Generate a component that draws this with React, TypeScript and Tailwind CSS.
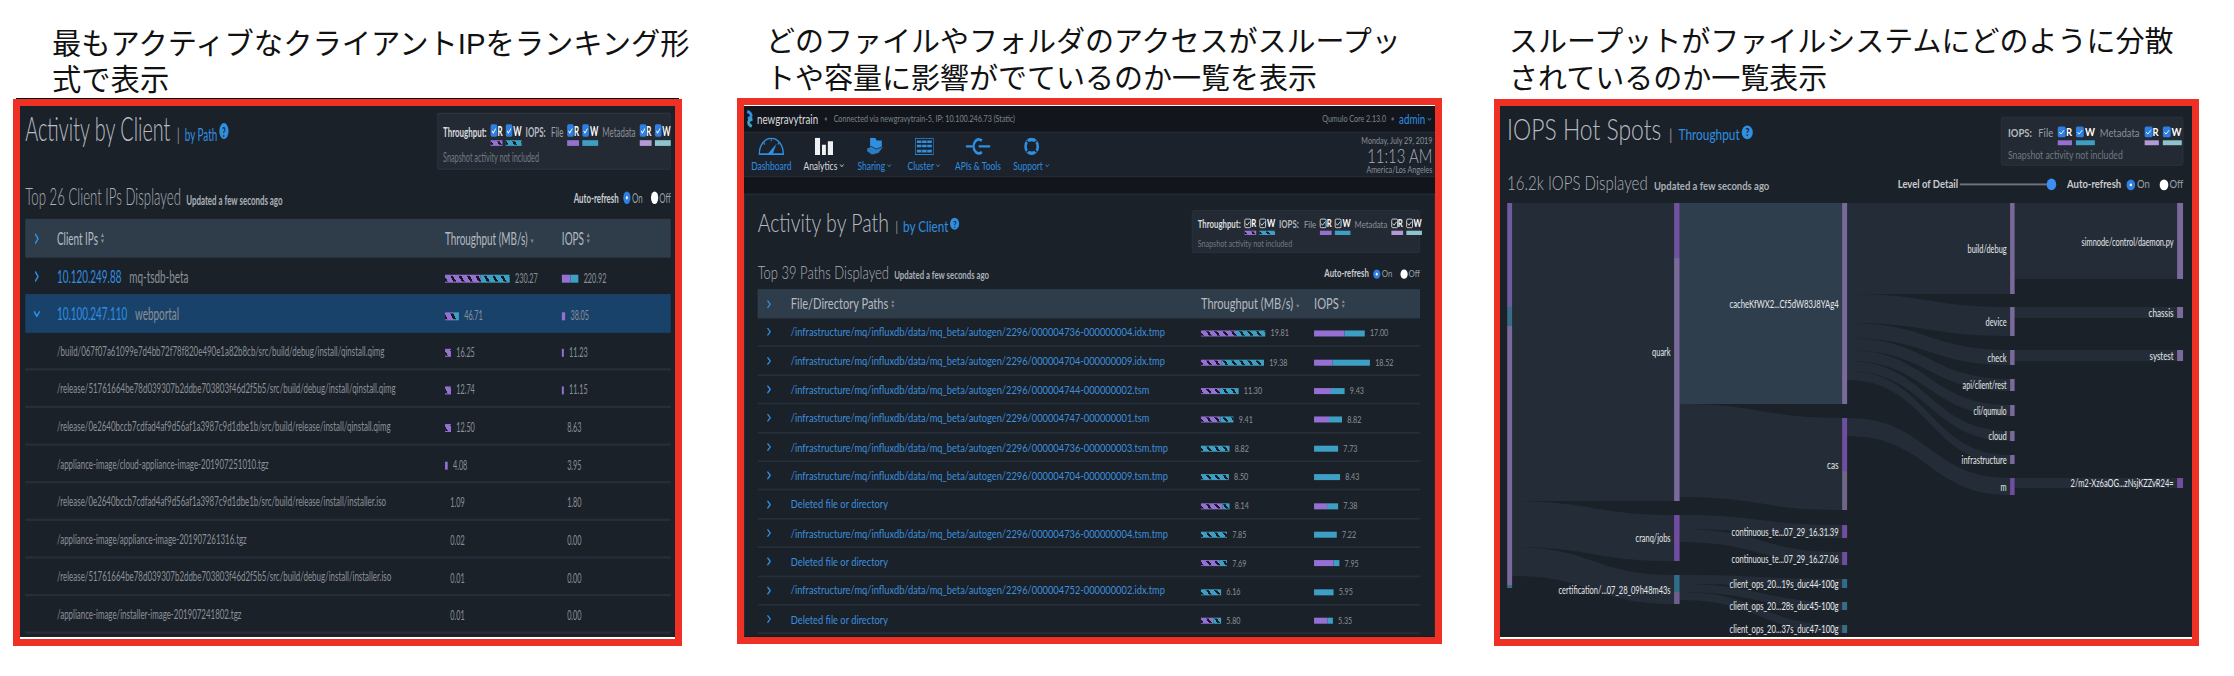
import { Check, ChevronDown, ChevronRight } from "lucide-react";
import type { ReactNode } from "react";

const Help = () => (
  <span className="ml-[3px] inline-flex h-[14px] w-[14px] items-center justify-center self-center rounded-full bg-[#2f8fe0] text-[11px] font-bold leading-none text-[#1b2129]">?</span>
);

const Box = ({ dark }: { dark?: boolean }) => (
  <span className={`flex h-[11px] w-[10px] items-center justify-center rounded-[2px] ${dark ? "border border-white bg-[#20262e]" : "bg-[#2f7fe0]"}`}>
    <Check size={8} strokeWidth={3} className="text-white" />
  </span>
);

const Pair = ({ r, w, dark, hatch }: { r: string; w: string; dark?: boolean; hatch?: boolean }) => (
  <div className="flex gap-[5px]">
    <div className="flex w-[18px] flex-col gap-[3px]">
      <div className="flex items-center justify-between text-[12px] font-bold leading-[11px] text-white"><Box dark={dark} />R</div>
      <div className={`relative h-[5px] ${r}`}>{hatch && <div className="absolute inset-x-0 inset-y-[1px] bg-[repeating-linear-gradient(45deg,#14181f_0,#14181f_3px,transparent_3px,transparent_9px)]" />}</div>
    </div>
    <div className="flex w-[24px] flex-col gap-[3px]">
      <div className="flex items-center justify-between text-[12px] font-bold leading-[11px] text-white"><Box dark={dark} />W</div>
      <div className={`relative h-[5px] ${w}`}>{hatch && <div className="absolute inset-x-0 inset-y-[1px] bg-[repeating-linear-gradient(45deg,#14181f_0,#14181f_3px,transparent_3px,transparent_9px)]" />}</div>
    </div>
  </div>
);

const Legend = ({ throughput, dark, className }: { throughput?: boolean; dark?: boolean; className: string }) => (
  <div className={`h-[50px] rounded-[3px] border border-[#2c343e] bg-[#232a33] px-[8px] pt-[9px] ${className}`}>
    <div className="flex items-start gap-[6px] text-[12px] leading-[14px]">
      {throughput && (
        <>
          <span className="font-bold text-[#d8dbde]">Throughput:</span>
          <Pair r="bg-[#9470d3]" w="bg-[#3d9fc4]" dark={dark} hatch />
        </>
      )}
      <span className="font-bold text-[#b5bac0]">IOPS:</span>
      <span className="ml-[2px] text-[#9aa0a7]">File</span>
      <Pair r="bg-[#9470d3]" w="bg-[#3d9fc4]" dark={dark} />
      <span className="text-[#8a9098]">Metadata</span>
      <Pair r="bg-[#b39ad6]" w="bg-[#8fc4cf]" dark={dark} />
    </div>
    <div className="mt-[4px] text-[11px] leading-[12px] text-[#727983]">Snapshot activity not included</div>
  </div>
);

const AutoRefresh = () => (
  <div className="flex items-center text-[12px] text-[#9aa0a7]">
    <span className="font-bold text-[#c8ccd0]">Auto-refresh</span>
    <span className="ml-[7px] flex h-[11px] w-[11px] items-center justify-center rounded-full bg-[#2f7fe0]"><span className="h-[3px] w-[3px] rounded-full bg-white" /></span>
    <span className="ml-[2px]">On</span>
    <span className="ml-[13px] h-[11px] w-[11px] rounded-full bg-white" />
    <span className="ml-[1px]">Off</span>
  </div>
);

const TitleRow = ({ title, link, legend, titleSize, linkSize }: { title: string; link: string; legend: ReactNode; titleSize: string; linkSize: string }) => (
  <div className="flex items-start justify-between">
    <div className="flex items-baseline whitespace-nowrap pt-[1px] leading-[24px]">
      <span className={`font-light text-[#b8bdc3] ${titleSize}`}>{title}</span>
      <span className="ml-[10px] text-[15px] text-[#9aa0a7]">|</span>
      <span className={`ml-[8px] text-[#2f8fe0] ${linkSize}`}>{link}</span>
      <Help />
    </div>
    {legend}
  </div>
);

const SubRow = ({ title, right, className, titleSize }: { title: string; right: ReactNode; className: string; titleSize: string }) => (
  <div className={`flex items-center justify-between whitespace-nowrap ${className}`}>
    <div className="flex items-baseline leading-[24px]">
      <span className={`font-light text-[#aab0b6] ${titleSize}`}>{title}</span>
      <span className="ml-[8px] text-[12px] font-bold text-[#aab0b6]">Updated a few seconds ago</span>
    </div>
    {right}
  </div>
);

const Sort = ({ down }: { down?: boolean }) => (
  <svg width="6" height="10" viewBox="0 0 6 10" className="ml-[4px]">
    {!down && <path d="M3 0.5 L5.5 4 H0.5 Z" fill="#7d848c" />}
    <path d="M3 9.5 L5.5 6 H0.5 Z" fill="#7d848c" />
  </svg>
);

const clientGrid = "grid grid-cols-[48px_1fr_177px_165px] items-center";
const pathGrid = "grid grid-cols-[51px_1fr_174px_163px] items-center";

const Header = ({ label, grid, size }: { label: string; grid: string; size: string }) => (
  <div className={`${grid} h-[34px] bg-[#2f3d4b] text-[#b5bac0] ${size}`}>
    <ChevronRight size={15} strokeWidth={3} className="ml-[10px] text-[#2f8fe0]" />
    <div className="flex items-center">{label}<Sort /></div>
    <div className="flex items-center">Throughput (MB/s)<Sort down /></div>
    <div className="flex items-center">IOPS<Sort /></div>
  </div>
);

const Bar = ({ w, p, hatch }: { w: number; p: number; hatch?: boolean }) => (
  <div className="relative flex h-[7px]" style={{ width: w }}>
    <div className="bg-[#9470d3]" style={{ width: `${p * 100}%` }} />
    <div className="flex-1 bg-[#3d9fc4]" />
    {hatch && <div className="absolute inset-x-0 inset-y-[1px] bg-[repeating-linear-gradient(45deg,#14181f_0,#14181f_3px,transparent_3px,transparent_9px)]" />}
  </div>
);

const Metric = ({ value, w, p, hatch }: { value: string; w: number; p: number; hatch?: boolean }) => (
  <div className="flex items-center pt-[4px]">
    <Bar w={w} p={p} hatch={hatch} />
    <span className="ml-[8px] text-[11px] text-[#8b9097]">{value}</span>
  </div>
);

const clientRows: [string, string, number, string, number][] = [
  ["/build/067f07a61099e7d4bb72f78f820e490e1a82b8cb/src/build/debug/install/qinstall.qimg", "16.25", 9, "11.23", 3],
  ["/release/51761664be78d039307b2ddbe703803f46d2f5b5/src/build/debug/install/qinstall.qimg", "12.74", 9, "11.15", 3],
  ["/release/0e2640bccb7cdfad4af9d56af1a3987c9d1dbe1b/src/build/release/install/qinstall.qimg", "12.50", 9, "8.63", 0],
  ["/appliance-image/cloud-appliance-image-201907251010.tgz", "4.08", 4, "3.95", 0],
  ["/release/0e2640bccb7cdfad4af9d56af1a3987c9d1dbe1b/src/build/release/install/installer.iso", "1.09", 0, "1.80", 0],
  ["/appliance-image/appliance-image-201907261316.tgz", "0.02", 0, "0.00", 0],
  ["/release/51761664be78d039307b2ddbe703803f46d2f5b5/src/build/debug/install/installer.iso", "0.01", 0, "0.00", 0],
  ["/appliance-image/installer-image-201907241802.tgz", "0.01", 0, "0.00", 0],
];

const base = "/infrastructure/mq/influxdb/data/mq_beta/autogen/2296/";
const pathRows: [string, string, number, number, string, number, number][] = [
  [base + "000004736-000000004.idx.tmp", "19.81", 99, 0.55, "17.00", 78, 0.6],
  [base + "000004704-000000009.idx.tmp", "19.38", 97, 0.33, "18.52", 86, 0.32],
  [base + "000004744-000000002.tsm", "11.30", 58, 0.5, "9.43", 47, 0.55],
  [base + "000004747-000000001.tsm", "9.41", 50, 0.6, "8.82", 43, 0.53],
  [base + "000004736-000000003.tsm.tmp", "8.82", 44, 0, "7.73", 37, 0],
  [base + "000004704-000000009.tsm.tmp", "8.50", 43, 0, "8.43", 40, 0],
  ["Deleted file or directory", "8.14", 44, 0.75, "7.38", 37, 0.54],
  [base + "000004736-000000004.tsm.tmp", "7.85", 40, 0, "7.22", 35, 0],
  ["Deleted file or directory", "7.69", 40, 0.7, "7.95", 39, 0.78],
  [base + "000004752-000000002.idx.tmp", "6.16", 31, 0, "5.95", 30, 0],
  ["Deleted file or directory", "5.80", 31, 0.6, "5.35", 29, 0.72],
];

const ClientPanel = () => (
  <div className="h-[531px] w-[992px] origin-top-left scale-x-[0.66] scale-y-[1.14] pl-[8px] pr-[6px] pt-[6px]">
    <TitleRow title="Activity by Client" link="by Path" titleSize="text-[30px]" linkSize="text-[15px]" legend={<Legend throughput className="w-[354px]" />} />
    <SubRow title="Top 26 Client IPs Displayed" titleSize="text-[20px]" right={<AutoRefresh />} className="h-[43px] pt-[6px]" />
    <Header label="Client IPs" grid={clientGrid} size="text-[15px]" />
    <div className={`${clientGrid} h-[32px]`}>
      <ChevronRight size={15} strokeWidth={3} className="ml-[10px] text-[#2f8fe0]" />
      <div className="text-[15px] text-[#2f8fe0]">10.120.249.88<span className="ml-[12px] text-[#8b9097]">mq-tsdb-beta</span></div>
      <Metric value="230.27" w={98} p={0.55} hatch />
      <Metric value="220.92" w={25} p={0.5} />
    </div>
    <div className={`${clientGrid} h-[34px] bg-[#19426b]`}>
      <ChevronDown size={15} strokeWidth={3} className="ml-[10px] text-[#2f8fe0]" />
      <div className="text-[15px] text-[#2f8fe0]">10.100.247.110<span className="ml-[12px] text-[#8b9097]">webportal</span></div>
      <Metric value="46.71" w={21} p={0.6} hatch />
      <Metric value="38.05" w={5} p={1} />
    </div>
    {clientRows.map(([path, a, aw, b, bw]) => (
      <div key={path} className={`${clientGrid} h-[33px] border-b-2 border-[#262e39]`}>
        <div />
        <div className="text-[12px] text-[#8b9097]">{path}</div>
        <Metric value={a} w={aw} p={1} hatch={aw > 5} />
        <Metric value={b} w={bw} p={1} />
      </div>
    ))}
  </div>
);

// app nav icons, drawn to the stretched proportions of the capture
const navIcons: Record<string, ReactNode> = {
  Dashboard: (
    <svg width="40" height="20" viewBox="0 0 40 20" fill="none">
      <path d="M1.5 19 A18.5 18.5 0 0 1 38.5 19 Z" stroke="#2f8fe0" strokeWidth="2" />
      <path d="M14 19 L28 7 L22 19 Z" fill="#2f8fe0" />
      <path d="M20 1 V4 M8 5 L10 8 M32 5 L30 8" stroke="#2f8fe0" strokeWidth="1.5" />
    </svg>
  ),
  Analytics: (
    <svg width="28" height="20" viewBox="0 0 28 20">
      <path d="M0 0 H8 V20 H0 Z M11 8 H17 V20 H11 Z M20 4 H28 V20 H20 Z" fill="#eef0f2" />
    </svg>
  ),
  Sharing: (
    <svg width="26" height="20" viewBox="0 0 26 20">
      <path d="M5 0 H13 L15 3 H23 V13 H5 Z" fill="#2f8fe0" />
      <path d="M0 12 L7 10 L14 13 L26 10 L18 18 L8 20 L0 16 Z" fill="#2a7cc4" stroke="#1c222b" strokeWidth="1" />
    </svg>
  ),
  Cluster: (
    <svg width="29" height="20" viewBox="0 0 29 20" fill="#2f8fe0">
      <rect x="0.5" y="0.5" width="28" height="19" fill="none" stroke="#2f8fe0" />
      <path d="M3 3 H10 V6 H3 Z M11 3 H18 V6 H11 Z M19 3 H26 V6 H19 Z M3 8 H10 V11 H3 Z M11 8 H18 V11 H11 Z M19 8 H26 V11 H19 Z M3 14 H10 V17 H3 Z M11 14 H18 V17 H11 Z M19 14 H26 V17 H19 Z" />
    </svg>
  ),
  "APIs & Tools": (
    <svg width="38" height="20" viewBox="0 0 38 20" fill="none" stroke="#2f8fe0" strokeWidth="2.5">
      <path d="M0 10 H11 M20 10 H38" />
      <path d="M25 3.5 A8 8 0 1 0 25 16.5" strokeWidth="3.5" />
    </svg>
  ),
  Support: (
    <svg width="23" height="20" viewBox="0 0 23 20" fill="none">
      <ellipse cx="11.5" cy="10" rx="9.5" ry="8" stroke="#2f8fe0" strokeWidth="4" />
      <path d="M4 3.5 L8 7 M19 3.5 L15 7 M4 16.5 L8 13 M19 16.5 L15 13" stroke="#1c222b" strokeWidth="2" />
    </svg>
  ),
};

const navItems = [
  { label: "Dashboard", text: "text-[#2f8fe0]", caret: false, width: "w-[60px]" },
  { label: "Analytics", text: "text-[#d8dbde]", caret: true, width: "w-[60px]" },
  { label: "Sharing", text: "text-[#2f8fe0]", caret: true, width: "w-[55px]" },
  { label: "Cluster", text: "text-[#2f8fe0]", caret: true, width: "w-[55px]" },
  { label: "APIs & Tools", text: "text-[#2f8fe0]", caret: false, width: "w-[68px]" },
  { label: "Support", text: "text-[#2f8fe0]", caret: true, width: "w-[55px]" },
];

const PathPanel = () => (
  <div className="h-[617px] w-[1063px] origin-top-left scale-x-[0.65] scale-y-[0.86]">
    <div className="flex h-[30px] items-center justify-between bg-[#12161c] pr-[4px]">
      <div className="flex items-center">
        <svg width="14" height="20" viewBox="0 0 14 20" fill="none" className="ml-[2px]">
          <path d="M3 1 C11 4 11 8 4 10" stroke="#2f8fe0" strokeWidth="4" />
          <path d="M11 10 C3 12 3 16 10 19" stroke="#3d9fc4" strokeWidth="4" />
        </svg>
        <span className="ml-[4px] text-[15px] text-[#d8dbde]">newgravytrain</span>
        <span className="ml-[10px] h-[4px] w-[4px] rounded-full bg-[#5a6169]" />
        <span className="ml-[10px] text-[11px] text-[#7d848c]">Connected via newgravytrain-5, IP: 10.100.246.73 (Static)</span>
      </div>
      <div className="flex items-center">
        <span className="text-[11px] text-[#7d848c]">Qumulo Core 2.13.0</span>
        <span className="mx-[8px] h-[4px] w-[4px] rounded-full bg-[#5a6169]" />
        <span className="text-[15px] text-[#2f8fe0]">admin</span>
        <ChevronDown size={9} strokeWidth={3} className="ml-[2px] text-[#2f8fe0]" />
      </div>
    </div>
    <div className="flex h-[53px] items-center justify-between border-y border-[#2b323c] bg-[#1c222b] pl-[12px] pr-[4px]">
      <div className="flex gap-[21px]">
        {navItems.map((item) => (
          <div key={item.label} className={`flex flex-col items-center ${item.width}`}>
            <div className="flex h-[21px] items-center">{navIcons[item.label]}</div>
            <div className={`mt-[4px] flex items-center whitespace-nowrap text-[13px] leading-[15px] ${item.text}`}>
              {item.label}
              {item.caret && <ChevronDown size={9} strokeWidth={3} className="ml-[2px]" />}
            </div>
          </div>
        ))}
      </div>
      <div className="flex flex-col items-end text-[11px] leading-[14px] text-[#8b9097]">
        <span>Monday, July 29, 2019</span>
        <span className="text-[23px] font-light leading-[20px] text-[#aab0b6]">11:13 AM</span>
        <span>America/Los Angeles</span>
      </div>
    </div>
    <div className="h-[19px] bg-[#12161c]" />
    <div className="h-[515px] border-x border-t border-[#2b323c] bg-[#1b2129] pl-[20px] pr-[22px] pt-[18px]">
      <TitleRow title="Activity by Path" link="by Client" titleSize="text-[30px]" linkSize="text-[18px]" legend={<Legend throughput dark className="w-[351px]" />} />
      <SubRow title="Top 39 Paths Displayed" titleSize="text-[20px]" right={<AutoRefresh />} className="h-[42px] pt-[6px]" />
      <Header label="File/Directory Paths" grid={pathGrid} size="text-[17px]" />
      {pathRows.map(([path, a, aw, ap, b, bw, bp], i) => (
        <div key={path + i} className={`${pathGrid} h-[33.4px] border-b-2 border-[#262e39]`}>
          <ChevronRight size={15} strokeWidth={3} className="ml-[10px] text-[#2f8fe0]" />
          <div className="text-[14.3px] text-[#3b8fdc]">{path}</div>
          <Metric value={a} w={aw} p={ap} hatch />
          <Metric value={b} w={bw} p={bp} />
        </div>
      ))}
    </div>
  </div>
);

// sankey coordinates below are measured on the screenshot, then divided back by the panel's scale
const SX = 0.79;
const SY = 0.98;
const px = (x: number) => x / SX;
const py = (y: number) => (y - 203) / SY;

const COL = [0, 167, 335, 503, 670];
const BAR = [5, 5.5, 5, 4.5, 6];

// [from col, top left, bottom left, top right, bottom right, bright]
const flows: [number, number, number, number, number, boolean?][] = [
  [0, 203, 501, 203, 501],
  [0, 501, 547, 515, 561],
  [0, 547, 576, 575, 604],
  [1, 203, 404, 203, 404, true],
  [1, 404, 497, 418, 510],
  [1, 515, 529, 525, 538],
  [1, 529, 542, 552, 565],
  [1, 575, 584, 579, 588],
  [1, 584, 592, 602, 610],
  [1, 592, 600, 625, 633],
  [2, 203, 294, 203, 294],
  [2, 294, 323, 307, 336],
  [2, 323, 338, 350, 365],
  [2, 338, 350, 379, 391],
  [2, 350, 361, 405, 416],
  [2, 361, 371, 431, 441],
  [2, 371, 380, 455, 464],
  [2, 418, 436, 478, 495],
  [3, 203, 279, 203, 279],
  [3, 307, 318, 307, 318],
  [3, 350, 361, 350, 361],
  [3, 478, 488, 478, 488],
];

// [col, top, bottom, colour]
const nodes: [number, number, number, string][] = [
  [0, 203, 307, "#6f5b9f"],
  [0, 307, 326, "#3a6c86"],
  [0, 326, 585, "#7b6a9d"],
  [0, 585, 588, "#3a6c86"],
  [1, 203, 258, "#6f539e"],
  [1, 258, 501, "#7a6a9b"],
  [1, 515, 561, "#6f4ea0"],
  [1, 575, 592, "#2f6d8a"],
  [1, 592, 604, "#6f5f8f"],
  [2, 203, 404, "#7a6a9b"],
  [2, 418, 471, "#6f4ea0"],
  [2, 471, 510, "#6f6589"],
  [2, 525, 538, "#6f4ea0"],
  [2, 552, 565, "#6f4ea0"],
  [2, 579, 588, "#2f6d8a"],
  [2, 602, 610, "#3a6c86"],
  [2, 625, 633, "#3a6c86"],
  [3, 203, 294, "#7a6a9b"],
  [3, 307, 336, "#7a6a9b"],
  [3, 350, 365, "#7a6a9b"],
  [3, 379, 391, "#7a6a9b"],
  [3, 405, 416, "#7a6a9b"],
  [3, 431, 441, "#7a6a9b"],
  [3, 455, 464, "#7a6a9b"],
  [3, 478, 495, "#6f4ea0"],
  [4, 203, 279, "#7a6a9b"],
  [4, 307, 318, "#7a6a9b"],
  [4, 350, 361, "#7a6a9b"],
  [4, 478, 488, "#6f4ea0"],
];

// [label, col whose bar it sits left of, centre y, width]
const labels: [string, number, number, number][] = [
  ["quark", 1, 352, 18.5],
  ["cranq/jobs", 1, 538, 35],
  ["certification/...07_28_09h48m43s", 1, 590, 112],
  ["cacheKfWX2...Cf5dW83J8YAg4", 2, 304, 109],
  ["cas", 2, 465, 11.5],
  ["continuous_te...07_29_16.31.39", 2, 532, 107],
  ["continuous_te...07_29_16.27.06", 2, 559, 107],
  ["client_ops_20...19s_duc44-100g", 2, 584, 109],
  ["client_ops_20...28s_duc45-100g", 2, 606, 109],
  ["client_ops_20...37s_duc47-100g", 2, 629, 109],
  ["build/debug", 3, 249, 39],
  ["device", 3, 322, 21],
  ["check", 3, 358, 19],
  ["api/client/rest", 3, 385, 44],
  ["cli/qumulo", 3, 411, 33],
  ["cloud", 3, 436, 18],
  ["infrastructure", 3, 460, 45],
  ["m", 3, 487, 6],
  ["simnode/control/daemon.py", 4, 242, 92],
  ["chassis", 4, 313, 25],
  ["systest", 4, 356, 24],
  ["2/m2-Xz6aOG...zNsjKZZvR24=", 4, 483, 103],
];

const flowPath = (c: number, a: number, b: number, d: number, e: number) => {
  const x0 = px(COL[c] + BAR[c]);
  const x1 = px(COL[c + 1]);
  const m = (x0 + x1) / 2;
  return `M${x0} ${py(a)} C${m} ${py(a)} ${m} ${py(d)} ${x1} ${py(d)} L${x1} ${py(e)} C${m} ${py(e)} ${m} ${py(b)} ${x0} ${py(b)} Z`;
};

const Sankey = () => (
  <svg width={px(676)} height={py(637)} className="block">
    {flows.map(([c, a, b, d, e, bright], i) => (
      <path key={i} d={flowPath(c, a, b, d, e)} fill={bright ? "#2f3e4d" : "#242d37"} />
    ))}
    {nodes.map(([c, t, b, color], i) => (
      <rect key={i} x={px(COL[c])} y={py(t)} width={px(BAR[c])} height={py(b) - py(t)} fill={color} />
    ))}
    {labels.map(([text, c, y, w]) => (
      <text
        key={text}
        x={px(COL[c] - 3.5)}
        y={py(y)}
        dy="0.35em"
        textAnchor="end"
        textLength={px(w)}
        lengthAdjust="spacingAndGlyphs"
        fontSize="12"
        fill="#e6e8ea"
      >
        {text}
      </text>
    ))}
  </svg>
);

const HotSpotPanel = () => (
  <div className="h-[531px] w-[876px] origin-top-left scale-x-[0.79] scale-y-[0.98] pl-[9px] pr-[11px] pt-[11px]">
    <TitleRow title="IOPS Hot Spots" link="Throughput" titleSize="text-[29px]" linkSize="text-[15px]" legend={<Legend className="w-[231px]" />} />
    <SubRow
      title="16.2k IOPS Displayed"
      titleSize="text-[19px]"
      className="h-[38px]"
      right={
        <div className="flex items-center">
          <span className="text-[12px] font-bold text-[#c8ccd0]">Level of Detail</span>
          <div className="relative ml-[2px] mr-[14px] h-[2px] w-[122px] bg-[#6b7280]">
            <span className="absolute -top-[5px] right-0 h-[12px] w-[12px] rounded-full bg-[#3b8ff0]" />
          </div>
          <AutoRefresh />
        </div>
      }
    />
    <Sankey />
  </div>
);

const Heading = ({ className, children }: { className: string; children: ReactNode }) => (
  <div className={`whitespace-nowrap font-['Liberation_Sans','Noto_Sans_CJK_JP',sans-serif] text-[#111] ${className}`}>{children}</div>
);

export default function App() {
  return (
    <div className="flex h-[676px] w-[2234px] overflow-hidden bg-white pl-[13px] font-[Lato,sans-serif]">
      <div className="w-[669px]">
        <Heading className="h-[98px] pl-[39px] pt-[26px] text-[29.3px] leading-[36px]">最もアクティブなクライアントIPをランキング形<br />式で表示</Heading>
        <div className="mx-[3px] h-[1px] bg-black" />
        <div className="w-[669px] border-[7px] border-[#ee3124]">
          <div className="h-[531px] overflow-hidden bg-[#1b2129]"><ClientPanel /></div>
          <div className="h-[2px] bg-white" />
        </div>
      </div>
      <div className="ml-[55px] w-[705px]">
        <Heading className="h-[98px] pl-[29px] pt-[24px] text-[29px] leading-[37px]">どのファイルやフォルダのアクセスがスループッ<br />トや容量に影響がでているのか一覧を表示</Heading>
        <div className="border-[7px] border-[#ee3124]">
          <div className="h-[1px] bg-white" />
          <div className="h-[531px] overflow-hidden bg-[#12161c]"><PathPanel /></div>
        </div>
      </div>
      <div className="ml-[52px] w-[705px]">
        <Heading className="h-[99px] pl-[15px] pt-[24px] text-[29px] leading-[37px]">スループットがファイルシステムにどのように分散<br />されているのか一覧表示</Heading>
        <div className="border-[7px] border-l-[6px] border-[#ee3124]">
          <div className="h-[531px] overflow-hidden bg-[#1b2129]"><HotSpotPanel /></div>
          <div className="h-[2px] bg-white" />
        </div>
      </div>
    </div>
  );
}
